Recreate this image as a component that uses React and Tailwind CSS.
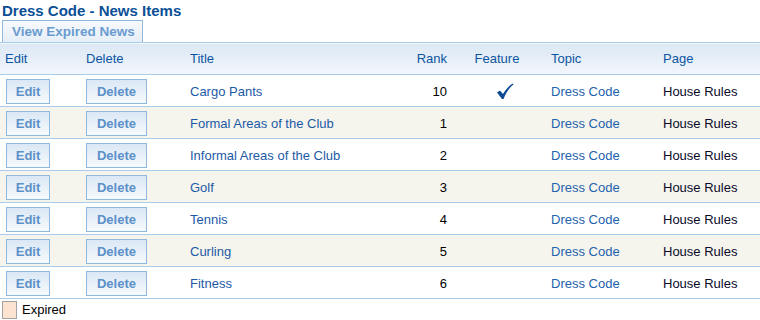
import React from "react"

const rows = [
  { title: "Cargo Pants", rank: 10, feature: true },
  { title: "Formal Areas of the Club", rank: 1 },
  { title: "Informal Areas of the Club", rank: 2 },
  { title: "Golf", rank: 3 },
  { title: "Tennis", rank: 4 },
  { title: "Curling", rank: 5 },
  { title: "Fitness", rank: 6 },
]

function Check() {
  return (
    <svg width="18" height="17" viewBox="0 0 18 17" className="inline-block align-middle">
      <path d="M1 9.5 L4 7.5 L7 11 C10 6 13 2.5 17 0.5 L17.5 1.5 C13.5 4.5 10.5 9 7.5 16 L6 16 Z" fill="#0d4a91" />
    </svg>
  )
}

function GridButton({ children, w }) {
  return (
    <button
      className={`${w} h-[25px] border border-[#8fb8dc] bg-gradient-to-b from-[#dae7f4] to-[#f6fafd] text-[13px] font-bold text-[#5b90c8] leading-none`}
    >
      {children}
    </button>
  )
}

export default function App() {
  return (
    <div className="w-[760px] h-[320px] bg-white font-['Liberation_Sans',Arial,sans-serif] text-[13px] overflow-hidden">
      <h1 className="pl-[2px] h-[20px] text-[15px] font-bold text-[#0b4f96] leading-[21px]">Dress Code - News Items</h1>
      <div className="flex">
        <div className="ml-[2px] w-[141px] h-[22px] border border-b-0 border-[#8fb8dc] bg-gradient-to-b from-[#f7fafd] to-[#e6eef7] text-[13.5px] font-bold text-[#6a9bd0] leading-[22px] pl-[9px]">
          View Expired News
        </div>
      </div>
      <table className="w-[760px] table-fixed border-collapse">
        <colgroup>
          <col className="w-[81px]" />
          <col className="w-[104px]" />
          <col className="w-[215px]" />
          <col className="w-[52px]" />
          <col className="w-[94px]" />
          <col className="w-[112px]" />
          <col />
        </colgroup>
        <thead>
          <tr className="h-[32px] border-y border-[#a7cdeb] bg-gradient-to-b from-[#dce8f4] to-[#f1f6fb] text-[#0d55a3] text-left">
            <th className="font-normal pl-[5px] pt-[1px]">Edit</th>
            <th className="font-normal pl-[5px] pt-[1px]">Delete</th>
            <th className="font-normal pl-[5px] pt-[1px]">Title</th>
            <th className="font-normal text-right pr-[5px] pt-[1px]">Rank</th>
            <th className="font-normal text-center pr-[4px] pt-[1px]">Feature</th>
            <th className="font-normal pl-[5px] pt-[1px]">Topic</th>
            <th className="font-normal pl-[5px] pt-[1px]">Page</th>
          </tr>
        </thead>
        <tbody>
          {rows.map((r, i) => (
            <tr key={r.title} className={`h-[32px] border-b border-[#a7cdeb] ${i % 2 ? "bg-[#f5f4ed]" : "bg-white"}`}>
              <td className="pl-[6px] pt-[2px]"><GridButton w="w-[44px]">Edit</GridButton></td>
              <td className="pl-[5px] pt-[2px]"><GridButton w="w-[61px]">Delete</GridButton></td>
              <td className="pl-[5px] pt-[2px] text-[#1c5aa6]">{r.title}</td>
              <td className="text-right pr-[5px] pt-[2px] text-black">{r.rank}</td>
              <td className="text-center pl-[12px]">{r.feature && <Check />}</td>
              <td className="pl-[5px] pt-[2px] text-[#2463ad]">Dress Code</td>
              <td className="pl-[5px] pt-[2px] text-[#0a0a2a]">House Rules</td>
            </tr>
          ))}
        </tbody>
      </table>
      <div className="flex items-center gap-[5px] pl-[2px] pt-[2px]">
        <span className="w-[15px] h-[18px] border border-[#a3a3a3] bg-[#fde4d0]" />
        <span className="text-black leading-[18px]">Expired</span>
      </div>
    </div>
  )
}
